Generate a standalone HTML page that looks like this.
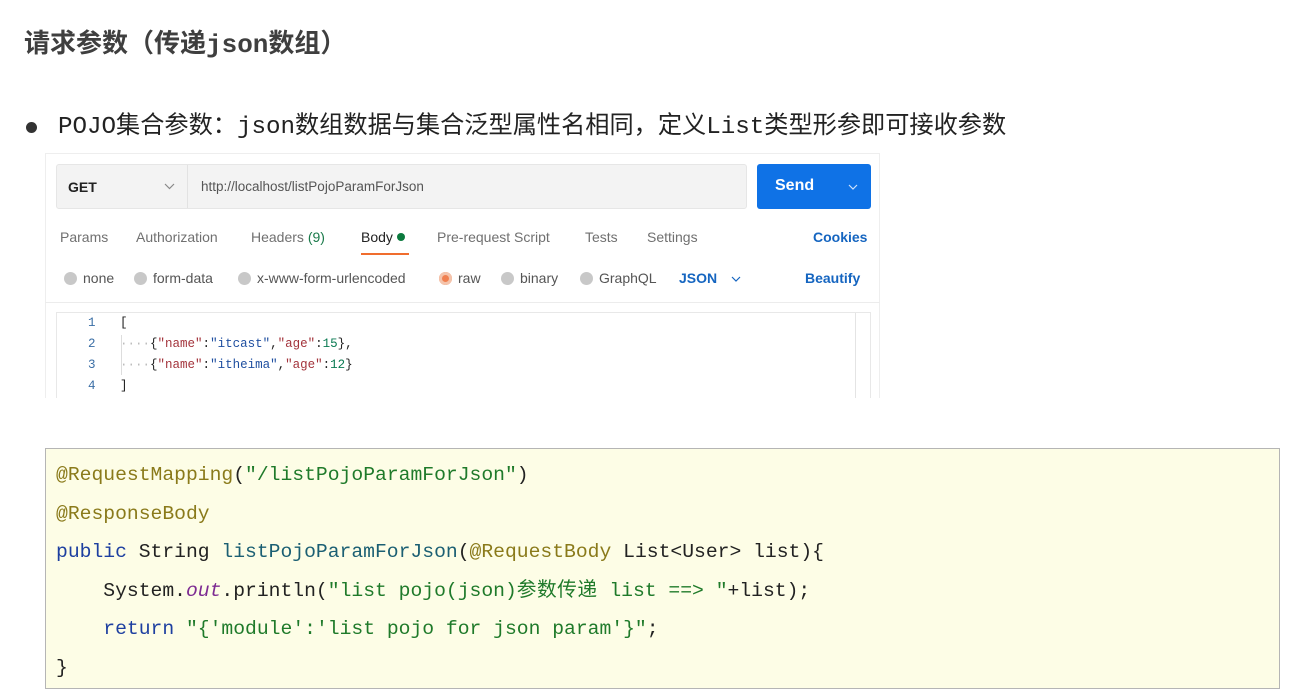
<!DOCTYPE html>
<html><head><meta charset="utf-8"><style>
*{margin:0;padding:0;box-sizing:border-box}
body{width:1304px;height:698px;background:#fff;position:relative;overflow:hidden;font-family:"Liberation Sans","Noto Sans CJK SC",sans-serif}
.abs{position:absolute;white-space:nowrap}
.title{left:24px;top:28px;font-size:26px;font-weight:bold;color:#3f3f3f;font-family:"Liberation Mono","Noto Sans CJK SC",monospace;line-height:34px}
.bullet{left:26px;top:122px;width:11px;height:11px;border-radius:50%;background:#333}
.bl{left:58px;top:112px;font-size:24.2px;color:#222;font-family:"Liberation Mono","Noto Sans CJK SC",monospace;line-height:32px}
.pm{left:45px;top:153px;width:835px;height:245px;border:1px solid #eee;border-bottom:none;background:#fff}
.url{left:56px;top:164px;width:691px;height:45px;background:#f3f3f3;border:1px solid #e6e6e6;border-radius:3px}
.get{left:68px;top:179px;font-size:14px;font-weight:bold;color:#222}
.sep{left:187px;top:165px;width:1px;height:43px;background:#e2e2e2}
.urlt{left:201px;top:179px;font-size:13.5px;color:#555}
.send{left:757px;top:164px;width:114px;height:45px;background:#0f72e6;border-radius:3px;color:#fff}
.tab{top:229px;font-size:14px;color:#707070}
.rad{top:270px;font-size:14px;color:#555}
.dot{display:inline-block;width:13px;height:13px;border-radius:50%;background:#c8c8c8;vertical-align:-2px;margin-right:6px}
.ed{left:56px;top:312px;width:815px;height:86px;border:1px solid #e8e8e8;border-bottom:none}
.ln{font-family:"Liberation Mono",monospace;font-size:12.5px;color:#3a6ea5;line-height:21px}
.cd{font-family:"Liberation Mono",monospace;font-size:12.5px;color:#222;line-height:21px}
.s{color:#1f4fa0}.k{color:#a3333b}.n{color:#0a7a52}
.code{left:45px;top:448px;width:1235px;height:241px;background:#fdfde6;border:1px solid #b5b5b5}
.cl{position:absolute;left:56px;font-family:"Liberation Mono","Noto Sans CJK SC",monospace;font-size:19.7px;color:#222;white-space:pre;line-height:24px}
.cj{letter-spacing:0.5px}
.an{color:#8a7a1a}.gr{color:#1f7a2a}.kw{color:#1d3fa0}.fn{color:#1b5f73}.it{color:#7d2b92;font-style:italic}
svg.ch{position:absolute}
</style></head><body>
<div class="abs title">请求参数（传递json数组）</div>
<div class="abs bullet"></div>
<div class="abs bl">POJO集合参数：json数组数据与集合泛型属性名相同，定义List类型形参即可接收参数</div>

<div class="abs pm"></div>
<div class="abs url"></div>
<div class="abs get">GET</div>
<svg class="ch" style="left:164px;top:183px" width="11" height="7" viewBox="0 0 11 7"><path d="M1 1l4.5 4.5L10 1" fill="none" stroke="#888" stroke-width="1.2"/></svg>
<div class="abs sep"></div>
<div class="abs urlt">http://localhost/listPojoParamForJson</div>
<div class="abs send"><span style="position:absolute;left:18px;top:13px;font-size:16px;font-weight:bold">Send</span></div>
<svg class="ch" style="left:848px;top:184px" width="10" height="6" viewBox="0 0 10 6"><path d="M1 1l4 4 4-4" fill="none" stroke="#cfe2fb" stroke-width="1.2"/></svg>

<div class="abs tab" style="left:60px">Params</div>
<div class="abs tab" style="left:136px">Authorization</div>
<div class="abs tab" style="left:251px">Headers <span style="color:#1a7a4a">(9)</span></div>
<div class="abs tab" style="left:361px;color:#222">Body <span style="display:inline-block;width:8px;height:8px;border-radius:50%;background:#0b7a3e;vertical-align:1px"></span></div>
<div class="abs" style="left:361px;top:253px;width:48px;height:2px;background:#f06d2e"></div>
<div class="abs tab" style="left:437px">Pre-request Script</div>
<div class="abs tab" style="left:585px">Tests</div>
<div class="abs tab" style="left:647px">Settings</div>
<div class="abs tab" style="left:813px;color:#1565c0;font-weight:bold">Cookies</div>

<div class="abs rad" style="left:64px"><span class="dot"></span>none</div>
<div class="abs rad" style="left:134px"><span class="dot"></span>form-data</div>
<div class="abs rad" style="left:238px"><span class="dot"></span>x-www-form-urlencoded</div>
<div class="abs rad" style="left:439px"><span class="dot" style="background:#f08050;box-shadow:inset 0 0 0 3px #f4c4ac"></span>raw</div>
<div class="abs rad" style="left:501px"><span class="dot"></span>binary</div>
<div class="abs rad" style="left:580px"><span class="dot"></span>GraphQL</div>
<div class="abs rad" style="left:679px;color:#1565c0;font-weight:bold">JSON</div>
<svg class="ch" style="left:731px;top:276px" width="10" height="6" viewBox="0 0 10 6"><path d="M1 1l4 4 4-4" fill="none" stroke="#1565c0" stroke-width="1.2"/></svg>
<div class="abs rad" style="left:805px;color:#1565c0;font-weight:bold">Beautify</div>
<div class="abs" style="left:45px;top:302px;width:835px;height:1px;background:#ececec"></div>

<div class="abs ed"></div>
<div class="abs" style="left:855px;top:313px;width:1px;height:85px;background:#e4e4e4"></div>
<div class="abs ln" style="left:88px;top:313px">1<br>2<br>3<br>4</div>
<div class="abs" style="left:121px;top:335px;width:1px;height:40px;background:#ddd"></div>
<div class="abs cd" style="left:120px;top:313px">[<br><span style="color:#bbb">····</span>{<span class="k">"name"</span>:<span class="s">"itcast"</span>,<span class="k">"age"</span>:<span class="n">15</span>},<br><span style="color:#bbb">····</span>{<span class="k">"name"</span>:<span class="s">"itheima"</span>,<span class="k">"age"</span>:<span class="n">12</span>}<br>]</div>

<div class="abs code"></div>
<div class="cl" style="top:463px"><span class="an">@RequestMapping</span>(<span class="gr">"/listPojoParamForJson"</span>)</div>
<div class="cl" style="top:502px"><span class="an">@ResponseBody</span></div>
<div class="cl" style="top:540px"><span class="kw">public</span> String <span class="fn">listPojoParamForJson</span>(<span class="an">@RequestBody</span> List&lt;User&gt; list){</div>
<div class="cl" style="top:579px">    System.<span class="it">out</span>.println(<span class="gr">"list pojo(json)<span class="cj">参数传递</span> list ==&gt; "</span>+list);</div>
<div class="cl" style="top:617px">    <span class="kw">return</span> <span class="gr">"{'module':'list pojo for json param'}"</span>;</div>
<div class="cl" style="top:656px">}</div>
</body></html>
